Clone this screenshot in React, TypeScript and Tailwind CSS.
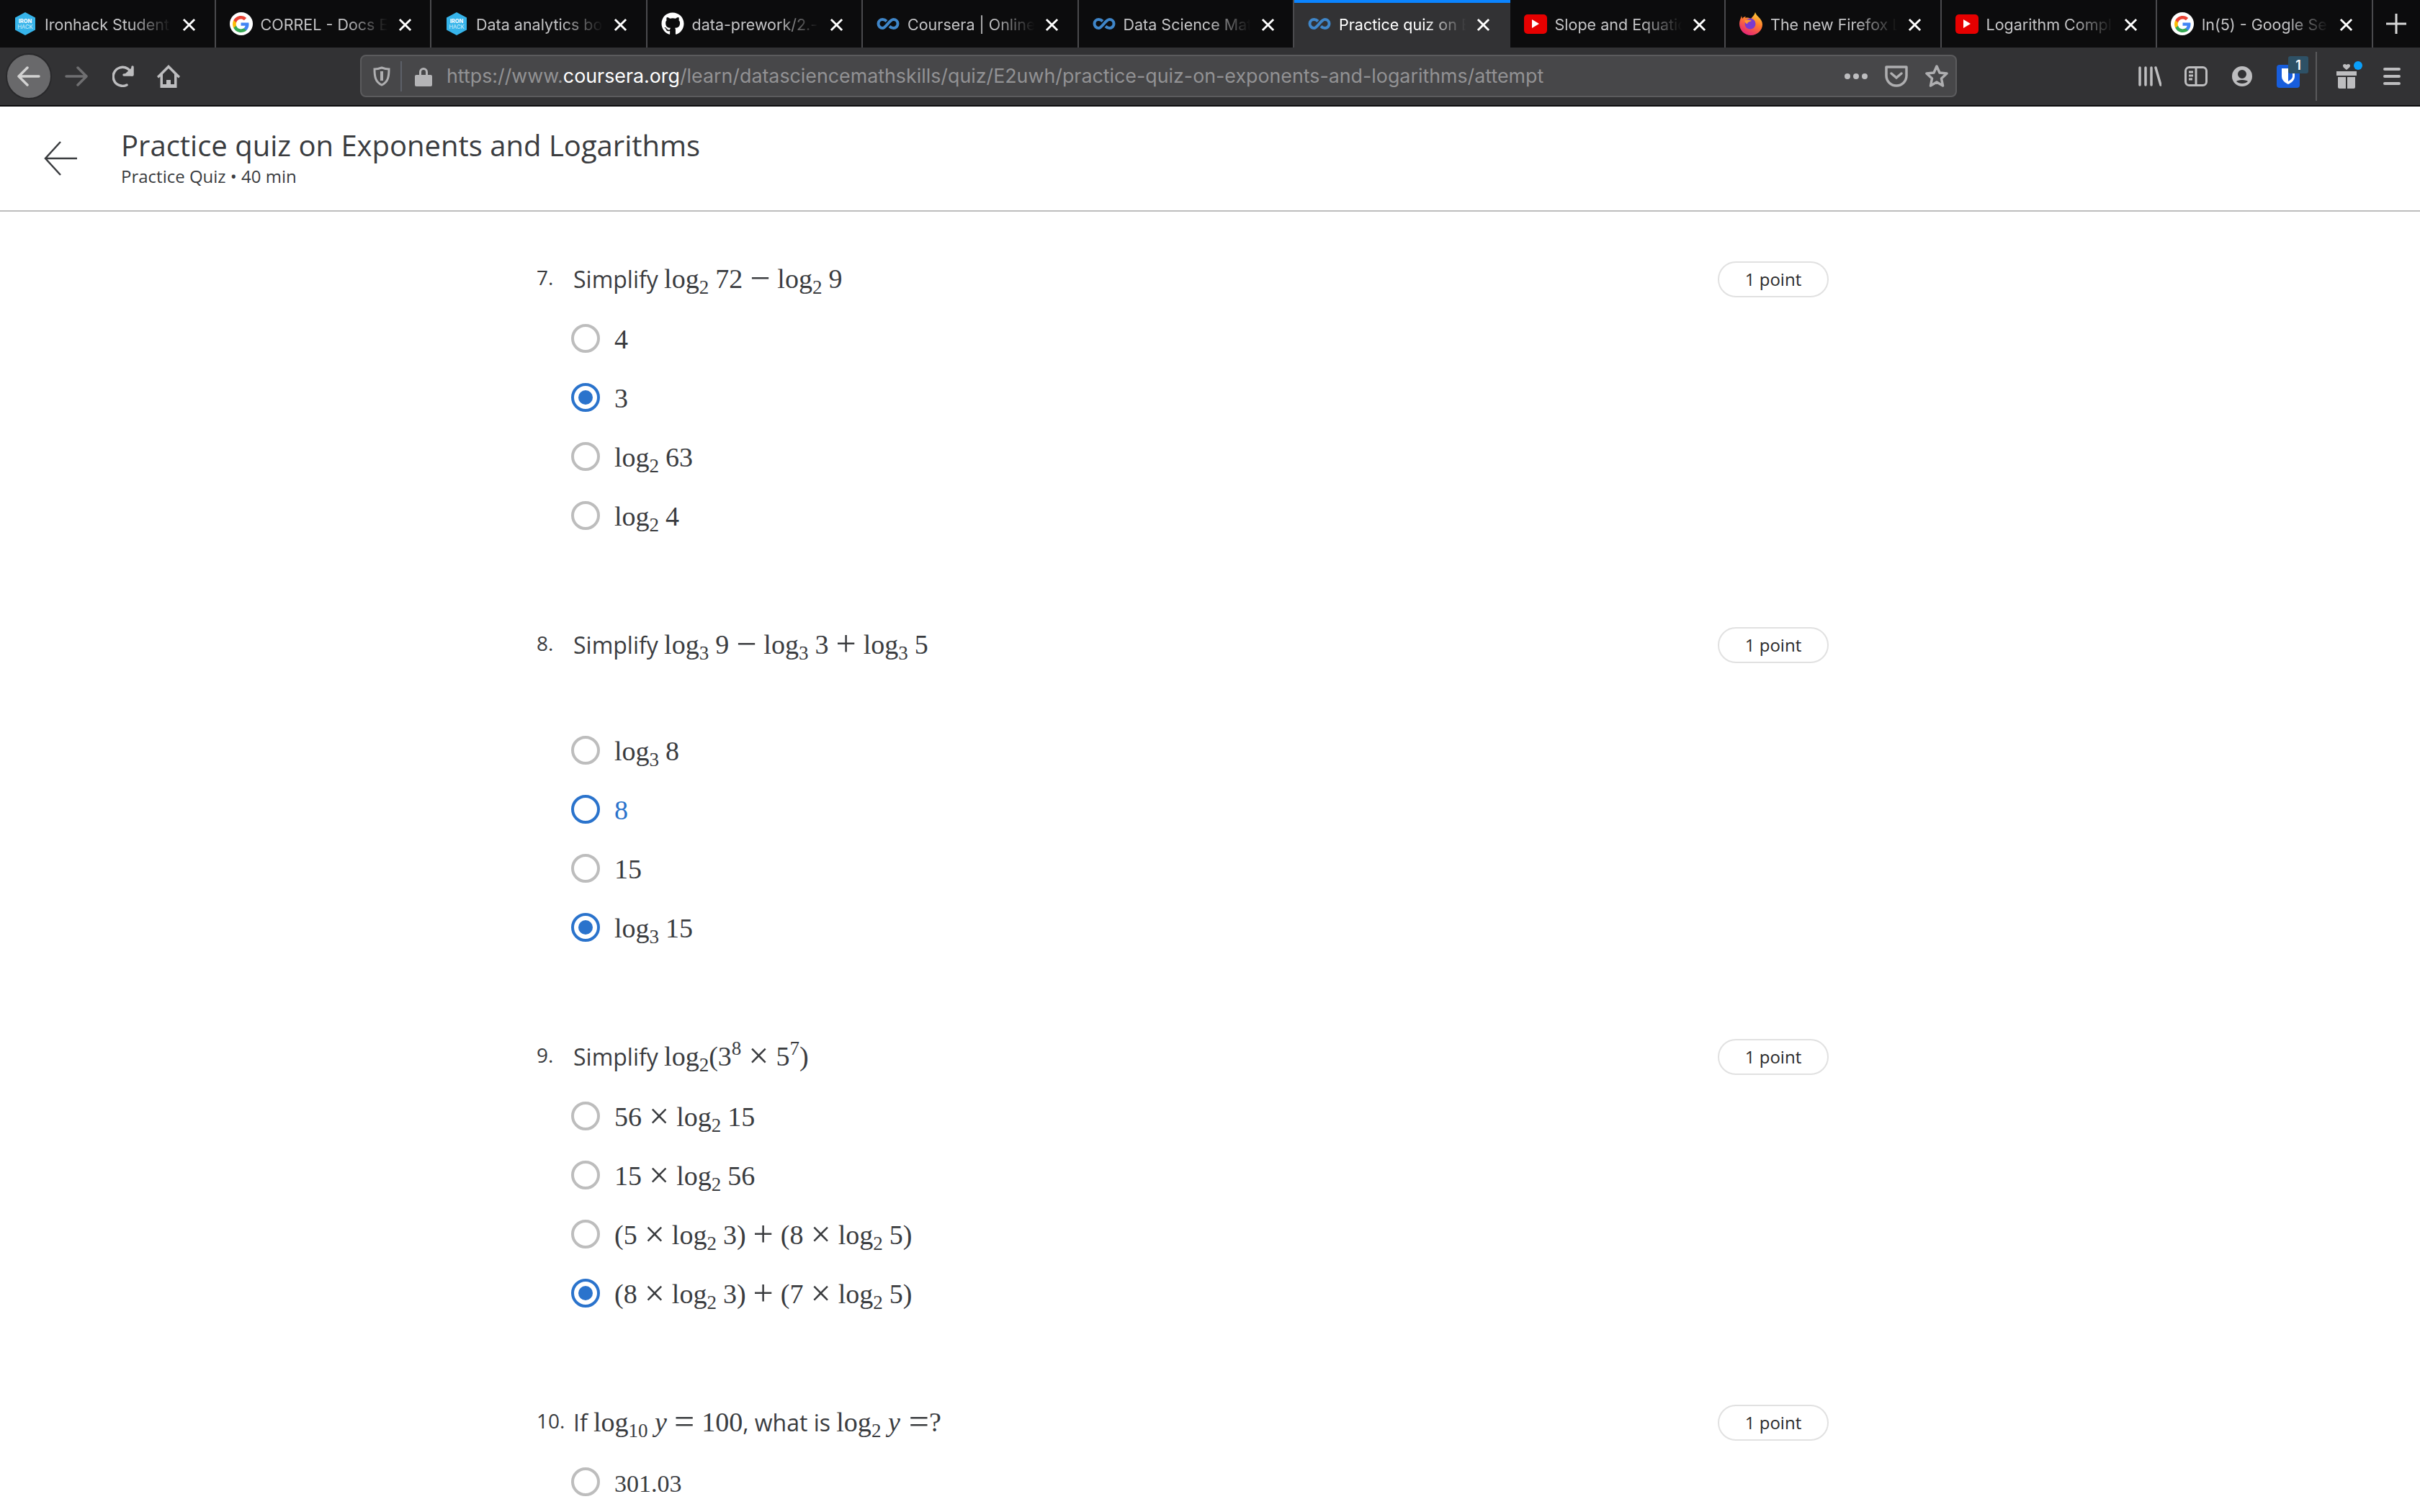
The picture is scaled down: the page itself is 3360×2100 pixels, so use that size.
import React from "react";
import { FaGithub } from "react-icons/fa";

const Sub = ({ c }: { c: string }) => (
  <span className="text-[27px] align-[-8px] leading-none">{c}</span>
);
const Sup = ({ c }: { c: string }) => (
  <span className="text-[27px] align-[15px] leading-none">{c}</span>
);
const Log = ({ b, a }: { b: string; a?: string }) => (
  <span>
    log
    <Sub c={b} />
    {a ? <span className="ml-[9px]">{a}</span> : null}
  </span>
);
const Op = ({ c }: { c: string }) => (
  <span className="mx-[10px] align-[-3px] text-[50px] leading-[0]">{c}</span>
);
const M = ({ children }: { children: React.ReactNode }) => (
  <span className="font-['Liberation_Serif',serif] text-[38px] leading-none whitespace-nowrap">{children}</span>
);

const Radio = ({ state }: { state?: "on" | "hover" }) => (
  <div
    className={
      state
        ? "flex h-10 w-10 shrink-0 items-center justify-center rounded-full border-4 border-[#2a73cc]"
        : "flex h-10 w-10 shrink-0 items-center justify-center rounded-full border-4 border-[#bdbdbd]"
    }
  >
    {state === "on" ? <div className="h-5 w-5 rounded-full bg-[#2a73cc]" /> : null}
  </div>
);

const Option = ({ state, children }: { state?: "on" | "hover"; children: React.ReactNode }) => (
  <div className={state === "hover" ? "flex h-[82px] items-center gap-5 pl-12 text-[#2a73cc]" : "flex h-[82px] items-center gap-5 pl-12 text-[#3a3c3f]"}>
    <Radio state={state} />
    <div className="mt-[2px] h-[38px] font-['Liberation_Serif',serif] text-[38px] leading-[38px] whitespace-nowrap">{children}</div>
  </div>
);

const Question = ({
  n,
  title,
  extra,
  children,
}: {
  n: string;
  title: React.ReactNode;
  extra?: boolean;
  children: React.ReactNode;
}) => (
  <section className="mb-[114px]">
    <div className={extra ? "mb-[80px] flex h-[50px] items-center" : "mb-[16px] flex h-[50px] items-center"}>
      <span className="w-[51px] shrink-0 pb-[6px] text-[28px] text-[#3a3c3f]">{n}</span>
      <div className="flex-1 text-[32px] whitespace-nowrap text-[#3a3c3f]">{title}</div>
      <div className="flex h-[50px] w-[154px] items-center justify-center rounded-full border-2 border-[#e1e1e1] text-[24px] text-[#2a2a2a]">
        1 point
      </div>
    </div>
    {children}
  </section>
);

const Google = () => (
  <div className="flex h-8 w-8 items-center justify-center rounded-full bg-white">
    <svg viewBox="0 0 48 48" className="h-[25px] w-[25px]">
      <path fill="#4285F4" d="M45.12 24.5c0-1.56-.14-3.06-.4-4.5H24v8.51h11.84c-.51 2.75-2.06 5.08-4.39 6.64v5.52h7.11c4.16-3.83 6.56-9.47 6.56-15.17z" />
      <path fill="#34A853" d="M24 46c5.94 0 10.92-1.97 14.56-5.33l-7.11-5.52c-1.97 1.32-4.49 2.1-7.45 2.1-5.73 0-10.58-3.87-12.31-9.07H4.34v5.7C7.96 41.07 15.4 46 24 46z" />
      <path fill="#FBBC05" d="M11.69 28.18C11.25 26.86 11 25.45 11 24s.25-2.86.69-4.18v-5.7H4.34C2.85 17.09 2 20.45 2 24c0 3.55.85 6.91 2.34 9.88l7.35-5.7z" />
      <path fill="#EA4335" d="M24 10.75c3.23 0 6.13 1.11 8.41 3.29l6.31-6.31C34.91 4.18 29.93 2 24 2 15.4 2 7.96 6.93 4.34 14.12l7.35 5.7c1.73-5.2 6.58-9.07 12.31-9.07z" />
    </svg>
  </div>
);
const Iron = () => (
  <svg viewBox="0 0 32 32" className="h-8 w-8">
    <path fill="#36b4ea" d="M16 0 30 7.500V24.500L16 32 2 24.500V7.500Z" />
    <text x="16" y="14.500" textAnchor="middle" fontSize="7.500" fontWeight="700" fill="#fff" fontFamily="Inter">IRON</text>
    <text x="16" y="23" textAnchor="middle" fontSize="7.500" fill="#d8f2fc" fontFamily="Inter">HACK</text>
  </svg>
);
const Github = () => <FaGithub className="h-8 w-8 text-white" />;
const Coursera = () => (
  <svg viewBox="0 0 32 16" className="h-8 w-8" fill="none">
    <path stroke="#3f86c9" strokeWidth="4" d="M14 4.500C12.500 3 10.500 2 8.500 2a6 6 0 0 0 0 12C13 14 18 2 23.500 2a6 6 0 0 1 0 12c-2.500 0-4-1-5.500-2.500" />
  </svg>
);
const Youtube = () => (
  <div className="flex h-[27px] w-8 items-center justify-center rounded-[5px] bg-[#e60000]">
    <svg viewBox="0 0 10 12" className="h-[12px] w-[10px]"><path fill="#fff" d="M0 0 10 6 0 12Z" /></svg>
  </div>
);
const Firefox = () => (
  <svg viewBox="0 0 32 32" className="h-8 w-8">
    <defs>
      <linearGradient id="ff" x1="0.8" y1="0" x2="0.3" y2="1">
        <stop offset="0" stopColor="#ffd43a" />
        <stop offset="0.45" stopColor="#ff7a2e" />
        <stop offset="1" stopColor="#e5207a" />
      </linearGradient>
    </defs>
    <path fill="url(#ff)" d="M22 0c1 3 3 5 5 7 3 3 5 6 5 10 0 8-7 15-16 15S0 25 0 16c0-3 1-6 2-8l1-3 1 4c1-2 3-3 5-3-1 1-1 2-1 2 3-1 6 0 8 1 2-3 5-5 6-9Z" />
    <circle cx="15" cy="16" r="7.500" fill="#7a3bd0" />
    <path fill="#ff9a2e" d="M7 12c3-2 7-2 10 0l-5 2-1 2c-2 0-3-2-4-4Z" />
  </svg>
);

const tabs: { t: string; i: React.ReactNode; active?: boolean }[] = [
  { t: "Ironhack Student", i: <Iron /> },
  { t: "CORREL - Docs E", i: <Google /> },
  { t: "Data analytics bo", i: <Iron /> },
  { t: "data-prework/2.-", i: <Github /> },
  { t: "Coursera | Online", i: <Coursera /> },
  { t: "Data Science Mat", i: <Coursera /> },
  { t: "Practice quiz on E", i: <Coursera />, active: true },
  { t: "Slope and Equatio", i: <Youtube /> },
  { t: "The new Firefox L", i: <Firefox /> },
  { t: "Logarithm Compl", i: <Youtube /> },
  { t: "ln(5) - Google Se", i: <Google /> },
];

const Tab = ({ t, i, active }: { t: string; i: React.ReactNode; active?: boolean }) => (
  <div
    className={
      active
        ? "flex h-[66px] w-[299.5px] shrink-0 items-center border-t-4 border-[#0a84ff] bg-[#323234] pb-[4px] pl-[19px] text-white"
        : "flex h-[66px] w-[299.5px] shrink-0 items-center border-r-2 border-[#4a4a4d] pl-[19px] text-[#c4c4c6]"
    }
  >
    <div className="flex w-8 shrink-0 justify-center">{i}</div>
    <div className="mt-[3px] ml-[11px] w-[182px] overflow-hidden text-[21.500px] whitespace-nowrap [mask-image:linear-gradient(to_right,black_65%,transparent_97%)]">
      {t}
    </div>
    <svg viewBox="0 0 20 20" className="mt-[2px] ml-[9px] h-[19px] w-[19px]" fill="none" stroke="#fff" strokeWidth="3">
      <path d="M2 2 18 18M18 2 2 18" />
    </svg>
  </div>
);

const ic = "#bdbdbf";

export default function App() {
  return (
    <div className="h-[2100px] w-[3360px] overflow-hidden bg-white font-['Open_Sans',sans-serif]">
      {/* tab strip */}
      <div className="flex h-[66px] items-stretch bg-[#0c0c0d] font-['Inter',sans-serif]">
        {tabs.map((x) => (
          <Tab key={x.t} {...x} />
        ))}
        <div className="flex flex-1 items-center justify-center">
          <svg viewBox="0 0 28 28" className="h-7 w-7" stroke="#d8d8d8" strokeWidth="3"><path d="M14 0V28M0 14H28" /></svg>
        </div>
      </div>

      {/* toolbar */}
      <div className="flex h-[82px] items-start border-b-2 border-[#0c0c0d] bg-[#323234] font-['Inter',sans-serif]">
        <div className="mt-[8px] ml-[8px] flex h-[64px] w-[64px] items-center justify-center rounded-full border-2 border-[#29292b] bg-[#69696b]">
          <svg viewBox="0 0 32 28" className="h-[28px] w-[32px]" fill="none" stroke="#d2d2d2" strokeWidth="3.500" strokeLinecap="round" strokeLinejoin="round"><path d="M30 14H3M14 2 2 14l12 12" /></svg>
        </div>
        <svg viewBox="0 0 32 28" className="mt-[26px] ml-[18px] h-[28px] w-[32px]" fill="none" stroke="#6f6f71" strokeWidth="3.500" strokeLinecap="round" strokeLinejoin="round"><path d="M2 14h27M18 2l12 12-12 12" /></svg>
        <svg viewBox="0 0 30 30" className="mt-[25px] ml-[34px] h-[30px] w-[30px]" fill="none" stroke={ic} strokeWidth="3.500" strokeLinecap="round" strokeLinejoin="round"><path d="M27 13A13 13 0 1 0 20 27" /><path d="M28 2V13H16" fill={ic} /></svg>
        <svg viewBox="0 0 32 32" className="mt-[24px] ml-[32px] h-8 w-8"><path fill={ic} d="M16 0 32 16l-2 2.500-2.500-2V32h-23V16.500L2 18.500 0 16ZM16 5 8 13v15h5v-7h6v7h5V13Z" /><rect x="8" y="27" width="16" height="2" fill={ic} /></svg>

        {/* address bar */}
        <div className="mt-[10px] ml-[250px] flex h-[59px] w-[2217px] items-center rounded-[8px] border-2 border-[#5b5b5d] bg-[#474749]">
          <svg viewBox="0 0 24 28" className="ml-[16px] h-[28px] w-6" fill="none"><path stroke="#aeaeb0" strokeWidth="3" d="M12 2c4 1.500 6 2 10 2 0 10-1 18-10 22C3 22 2 14 2 4c4 0 6-.5 10-2Z" /><path fill="#aeaeb0" d="M10 7h4v13h-4z" /></svg>
          <div className="ml-[14px] h-[42px] w-[2px] bg-[#5c6068]" />
          <svg viewBox="0 0 24 28" className="ml-[18px] h-[28px] w-6"><path fill="#b4b4b6" d="M6 12V8a6 6 0 0 1 12 0v4h4a2 2 0 0 1 2 2v12a2 2 0 0 1-2 2H2a2 2 0 0 1-2-2V14a2 2 0 0 1 2-2Zm3 0h6V8a3 3 0 0 0-6 0Z" /></svg>
          <div className="ml-[20px] text-[26.800px] whitespace-nowrap text-[#929294]">
            https://www.<span className="text-white">coursera.org</span>/learn/datasciencemathskills/quiz/E2uwh/practice-quiz-on-exponents-and-logarithms/attempt
          </div>
          <div className="mr-[10px] ml-auto flex items-center">
            <svg viewBox="0 0 32 8" className="h-2 w-8"><circle cx="4" cy="4" r="4" fill={ic} /><circle cx="16" cy="4" r="4" fill={ic} /><circle cx="28" cy="4" r="4" fill={ic} /></svg>
            <svg viewBox="0 0 32 30" className="ml-[24px] h-[30px] w-8" fill="none" stroke="#aeaeb0" strokeWidth="3.500"><path d="M2 2h28v12a14 14 0 0 1-28 0Z" strokeLinejoin="round" /><path d="M9 11l7 6 7-6" strokeLinecap="round" /></svg>
            <svg viewBox="0 0 32 32" className="ml-[24px] h-8 w-8" fill="none" stroke="#aeaeb0" strokeWidth="3.500" strokeLinejoin="round"><path d="M16 2l4 9 10 1-7.500 7 2 10L16 24l-8.500 5 2-10L2 12l10-1Z" /></svg>
          </div>
        </div>

        {/* right tools */}
        <div className="ml-[252px] flex h-[80px] items-center">
          <div className="flex items-center gap-8">
            <svg viewBox="0 0 32 28" className="h-7 w-8" fill="none" stroke={ic} strokeWidth="3.500" strokeLinecap="round"><path d="M2 2V26M10 2V26M18 2V26M24 2 31 26" /></svg>
            <svg viewBox="0 0 32 28" className="h-7 w-8" fill="none" stroke={ic} strokeWidth="3"><rect x="1.500" y="1.500" width="29" height="25" rx="5" /><path d="M16 2V26M6 8h6M6 13h6M6 18h5" /></svg>
            <svg viewBox="0 0 32 32" className="h-8 w-8"><path fill={ic} fillRule="evenodd" d="M16 2a14 14 0 1 0 0 28 14 14 0 0 0 0-28Zm0 5a6 6 0 1 1 0 12 6 6 0 0 1 0-12Zm0 19c-3 0-6-1-8-3 1-1 4-2 8-2s7 1 8 2c-2 2-5 3-8 3Z" /></svg>
            <div className="relative h-8 w-8">
              <div className="flex h-8 w-8 items-center justify-center rounded-[4px] bg-[#175ddc]">
                <svg viewBox="0 0 20 24" className="h-[24px] w-5"><path fill="#fff" d="M1 1h18v11c0 6-5 9-9 11-4-2-9-5-9-11Z" /><path fill="#175ddc" d="M10 4h6v8c0 3-3 5-6 7Z" /></svg>
              </div>
              <div className="absolute top-[-12px] left-4 flex h-6 w-7 items-center justify-center rounded-[3px] bg-[#2e5166] text-[18px] font-semibold text-white">1</div>
            </div>
          </div>
          <div className="ml-[22px] h-[68px] w-[2px] bg-[#59595b]" />
          <svg viewBox="0 0 36 38" className="mt-[-4px] ml-[27px] h-[38px] w-[36px]">
            <path fill={ic} d="M0 14h28v6H0ZM2 22h11v16H4a2 2 0 0 1-2-2ZM15 22h11v14a2 2 0 0 1-2 2h-9ZM14 12C10 9 9 8 9 6c0-2 3-3 5-1 2-2 5-1 5 1 0 2-1 3-5 6Z" />
            <circle cx="30" cy="6" r="6" fill="#0a9ffa" />
          </svg>
          <svg viewBox="0 0 24 24" className="ml-[29px] h-6 w-6" fill="none" stroke={ic} strokeWidth="4" strokeLinecap="round"><path d="M2 2H22M2 12H22M2 22H22" /></svg>
        </div>
      </div>

      {/* course header */}
      <header className="flex h-[146px] items-start border-b-2 border-[#bdbdbd] text-[#3a3c3f]">
        <svg viewBox="0 0 46 48" className="mt-[48px] ml-[61px] h-12 w-[46px]" fill="none" stroke="#3a3c3f" strokeWidth="2.500"><path d="M46 24H2M23 1 2 24l21 23" /></svg>
        <div className="ml-[61px]">
          <h1 className="mt-[28px] text-[40px] leading-[52px]">Practice quiz on Exponents and Logarithms</h1>
          <p className="text-[24px] leading-[34px]">Practice Quiz • 40 min</p>
        </div>
      </header>

      {/* quiz */}
      <main className="ml-[745px] w-[1794px] pt-[69px]">
        <Question n="7." title={<>Simplify <M><Log b="2" a="72" /><Op c="−" /><Log b="2" a="9" /></M></>}>
          <Option>4</Option>
          <Option state="on">3</Option>
          <Option><Log b="2" a="63" /></Option>
          <Option><Log b="2" a="4" /></Option>
        </Question>
        <Question n="8." extra title={<>Simplify <M><Log b="3" a="9" /><Op c="−" /><Log b="3" a="3" /><Op c="+" /><Log b="3" a="5" /></M></>}>
          <Option><Log b="3" a="8" /></Option>
          <Option state="hover">8</Option>
          <Option>15</Option>
          <Option state="on"><Log b="3" a="15" /></Option>
        </Question>
        <Question n="9." title={<>Simplify <M><Log b="2" />(3<Sup c="8" /><Op c="×" />5<Sup c="7" />)</M></>}>
          <Option>56<Op c="×" /><Log b="2" a="15" /></Option>
          <Option>15<Op c="×" /><Log b="2" a="56" /></Option>
          <Option>(5<Op c="×" /><Log b="2" a="3" />)<Op c="+" />(8<Op c="×" /><Log b="2" a="5" />)</Option>
          <Option state="on">(8<Op c="×" /><Log b="2" a="3" />)<Op c="+" />(7<Op c="×" /><Log b="2" a="5" />)</Option>
        </Question>
        <Question n="10." title={<>If <M><Log b="10" /> <i>y</i><Op c="=" />100</M>, what is <M><Log b="2" /> <i>y</i><span className="ml-[12px] align-[-3px] text-[50px] leading-[0]">=</span>?</M></>}>
          <Option><span className="text-[34px]">301.03</span></Option>
        </Question>
      </main>
    </div>
  );
}
